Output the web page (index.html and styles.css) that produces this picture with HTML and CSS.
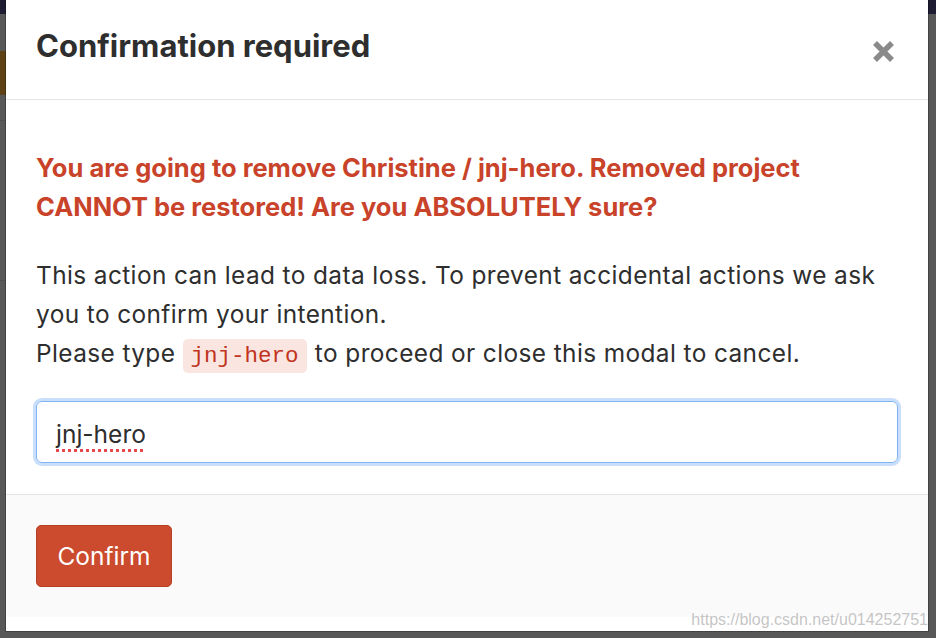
FILE: index.html
```html
<!DOCTYPE html>
<html>
<head>
    <meta charset="utf-8">
    <title>Confirmation required</title>
    <link rel="stylesheet" href="styles.css">
</head>
<body>

<div class="backdrop">
    <div class="modal">
        <div class="modal_header">
            <h3 class="modal_title">Confirmation required</h3>
            <button type="button" class="close_btn" aria-label="Close">
                <svg width="23" height="23" viewBox="0 0 23 23">
                    <path d="M3 3 L20 20 M20 3 L3 20" stroke="#8a8a8a" stroke-width="5.5" fill="none"/>
                </svg>
            </button>
        </div>

        <div class="modal_body">
            <p class="warning">You are going to remove Christine / jnj-hero. Removed project CANNOT be restored! Are you ABSOLUTELY sure?</p>
            <p class="info">
                This action can lead to data loss. To prevent accidental actions we ask you to confirm your intention.<br>
                Please type <code>jnj-hero</code> to proceed or close this modal to cancel.
            </p>
            <div class="confirm_input" role="textbox"><span class="typo">jnj-hero</span></div>
        </div>

        <div class="modal_footer">
            <button type="button" class="confirm_btn">Confirm</button>
        </div>
    </div>
</div>

<div class="watermark">https://blog.csdn.net/u014252751</div>

</body>
</html>
```

FILE: styles.css
```css
html, body {
    margin: 0;
    padding: 0;
}

body {
    width: 936px;
    height: 638px;
    overflow: hidden;
    font-family: Inter, "Liberation Sans", Arial, sans-serif;
    background-color: #585858;
    /* dimmed page behind the overlay */
    background-image:
        linear-gradient(#1d1c33, #1d1c33),
        linear-gradient(#5e4216, #5e4216),
        linear-gradient(#4f4f4f, #4f4f4f),
        linear-gradient(#4f4f4f, #4f4f4f);
    background-size: 100% 14px, 6px 44px, 6px 1px, 6px 1px;
    background-position: 0 0, 0 51px, 0 120px, 0 280px;
    background-repeat: no-repeat;
    position: relative;
}

.backdrop {
    padding-left: 6px;
}

.modal {
    width: 922px;
    height: 631px;
    background: #fff;
    box-shadow: 0 0 0 1px rgba(0, 0, 0, 0.25);
}

.modal_header {
    height: 100px;
    border-bottom: 1px solid #e5e5e5;
    display: flex;
    align-items: center;
    justify-content: space-between;
    padding: 0 33px 0 30px;
    box-sizing: border-box;
}

.modal_title {
    margin: 0 0 8px 0;
    font-size: 31px;
    font-weight: 700;
    color: #2e2e2e;
}

.close_btn {
    border: none;
    background: none;
    padding: 0;
    margin-top: 4px;
    display: flex;
}

.modal_body {
    padding: 48px 30px 31px 30px;
}

.warning {
    margin: 0;
    color: #c8432a;
    font-weight: 700;
    font-size: 25.5px;
    line-height: 39px;
}

.info {
    margin: 30px 0 0 0;
    color: #2e2e2e;
    font-size: 24.4px;
    letter-spacing: 0.4px;
    line-height: 39px;
}

code {
    font-family: "Liberation Mono", "DejaVu Sans Mono", monospace;
    font-size: 22.5px;
    letter-spacing: 0;
    line-height: 1;
    display: inline-block;
    color: #c0341d;
    background: #fbe5e1;
    border-radius: 5px;
    padding: 6px 8px 5px;
    margin: 0 1px 0 0;
}

.confirm_input {
    margin-top: 28px;
    height: 62px;
    box-sizing: border-box;
    border: 1px solid #80b5f3;
    border-radius: 6px;
    box-shadow: 0 0 0 3px #c8defc;
    padding: 4px 19px 0;
    display: flex;
    align-items: center;
    font-size: 24.5px;
    color: #2e2e2e;
}

.typo {
    text-decoration: underline dotted #e5484d;
    text-decoration-thickness: 3px;
    text-underline-offset: 6px;
}

.modal_footer {
    border-top: 1px solid #e5e5e5;
    background: #fafafa;
    padding: 30px;
}

.confirm_btn {
    height: 62px;
    width: 136px;
    background: #cc4a2e;
    border: 1px solid #b53f27;
    border-radius: 5px;
    color: #fff;
    font-family: Inter, "Liberation Sans", Arial, sans-serif;
    font-size: 24.5px;
}

.watermark {
    position: absolute;
    right: 8px;
    bottom: 9px;
    font-family: "Liberation Sans", Arial, sans-serif;
    font-size: 16px;
    color: rgba(190, 190, 190, 0.9);
}
```
